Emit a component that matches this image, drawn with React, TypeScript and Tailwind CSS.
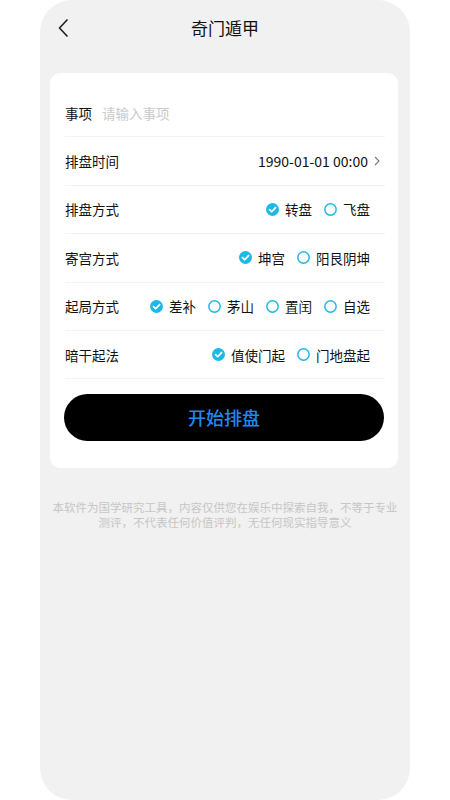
import React, { useState } from "react";

const font = {
  fontFamily: '"Noto Sans CJK SC", "Noto Sans", sans-serif',
};

function Radio({ on }: { on: boolean }) {
  return on ? (
    <svg width="13" height="13" viewBox="0 0 14 14" className="shrink-0">
      <circle cx="7" cy="7" r="7" fill="#1db9e6" />
      <path
        d="M3.8 7.2 L6.1 9.4 L10.3 4.9"
        fill="none"
        stroke="#fff"
        strokeWidth="1.9"
        strokeLinecap="round"
        strokeLinejoin="round"
      />
    </svg>
  ) : (
    <svg width="13" height="13" viewBox="0 0 14 14" className="shrink-0">
      <circle cx="7" cy="7" r="6.1" fill="none" stroke="#1db9e6" strokeWidth="1.6" />
    </svg>
  );
}

function Options({ items, value, onChange }: { items: string[]; value: number; onChange: (i: number) => void }) {
  return (
    <div className="flex items-center gap-[12px] mr-[15px]">
      {items.map((t, i) => (
        <button key={t} onClick={() => onChange(i)} className="flex items-center gap-[6px]">
          <Radio on={value === i} />
          <span className="text-[13.5px] text-[#111]">{t}</span>
        </button>
      ))}
    </div>
  );
}

export default function App() {
  const [sel, setSel] = useState<number[]>([0, 0, 0, 0]);
  const pick = (row: number, i: number) =>
    setSel((prev) => {
      const next = [...prev];
      next[row] = i;
      return next;
    });

  const groups: { label: string; items: string[] }[] = [
    { label: "排盘方式", items: ["转盘", "飞盘"] },
    { label: "寄宫方式", items: ["坤宫", "阳艮阴坤"] },
    { label: "起局方式", items: ["差补", "茅山", "置闰", "自选"] },
    { label: "暗干起法", items: ["值使门起", "门地盘起"] },
  ];

  return (
    <div className="w-[450px] h-[800px] bg-white" style={font}>
      <div className="ml-[40px] w-[370px] h-[800px] rounded-[32px] bg-[#f1f1f1] flex flex-col">
        {/* header */}
        <div className="relative h-[56px] flex items-center justify-center">
          <svg width="14" height="20" viewBox="0 0 14 20" className="absolute left-[17px] top-[18px]">
            <path d="M10 2 L2.5 10 L10 18" fill="none" stroke="#222" strokeWidth="1.7" strokeLinejoin="round" strokeLinecap="round" />
          </svg>
          <span className="text-[17px] text-[#111]">奇门遁甲</span>
        </div>

        {/* card */}
        <div className="mt-[17px] ml-[10px] mr-[12px] bg-white rounded-[10px] pt-[16px] pl-[15px] pr-[13px] pb-[27px]">
          <div className="h-[48.4px] border-b border-[#f3f3f3] flex items-center">
            <span className="text-[13.5px] text-[#111]">事项</span>
            <input
              placeholder="请输入事项"
              className="ml-[10px] flex-1 text-[13.5px] outline-none placeholder:text-[#c9cacc]"
            />
          </div>
          <div className="h-[48.4px] border-b border-[#f3f3f3] flex items-center justify-between">
            <span className="text-[13.5px] text-[#111]">排盘时间</span>
            <div className="flex items-center gap-[6px] mr-[5px]">
              <span className="text-[14px] text-[#111]">1990-01-01 00:00</span>
              <svg width="6" height="10" viewBox="0 0 6 10">
                <path d="M1 1 L5 5 L1 9" fill="none" stroke="#777" strokeWidth="1.1" />
              </svg>
            </div>
          </div>
          {groups.map((g, r) => (
            <div key={g.label} className="h-[48.4px] border-b border-[#f3f3f3] flex items-center justify-between">
              <span className="text-[13.5px] text-[#111]">{g.label}</span>
              <Options items={g.items} value={sel[r]} onChange={(i) => pick(r, i)} />
            </div>
          ))}
          <button className="mt-[15px] -ml-[1px] w-[320px] h-[47px] rounded-full bg-black text-[18px] font-medium text-[#1e8af2]">
            开始排盘
          </button>
        </div>

        <p className="mt-[32px] px-[10px] text-center text-[11.5px] leading-[15px] text-[#c6c6c6]">
          本软件为国学研究工具，内容仅供您在娱乐中探索自我，不等于专业测评，不代表任何价值评判，无任何现实指导意义
        </p>
      </div>
    </div>
  );
}
